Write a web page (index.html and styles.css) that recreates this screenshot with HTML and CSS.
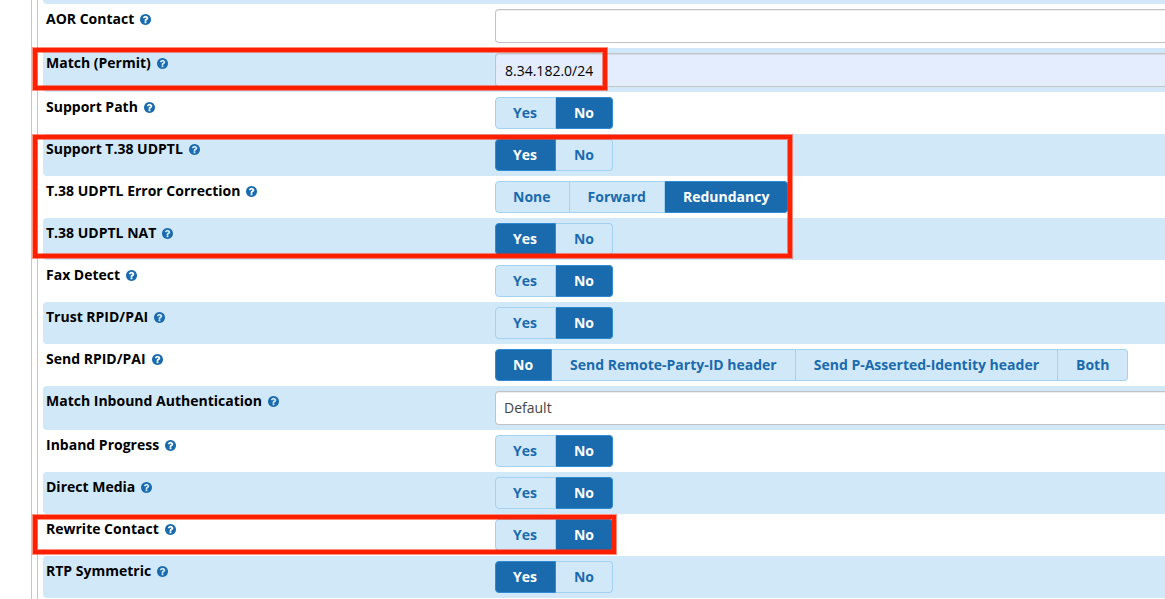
FILE: index.html
```html
<!DOCTYPE html>
<html lang="en">
<head>
<meta charset="utf-8">
<title>Trunk Settings</title>
<link rel="stylesheet" href="styles.css">
</head>
<body>
<svg class="sprite" aria-hidden="true">
  <symbol id="help" viewBox="128 128 1536 1536">
    <path d="M1024 1376v-192q0-14-9-23t-23-9h-192q-14 0-23 9t-9 23v192q0 14 9 23t23 9h192q14 0 23-9t9-23zm256-672q0-88-55.500-163t-138.500-116-170-41q-243 0-371 213-15 24 8 42l132 100q7 6 19 6 16 0 25-12 53-68 86-92 34-24 86-24 48 0 85.500 26t37.500 59q0 38-20 61t-68 45q-63 28-115.500 86.500t-52.500 125.500v36q0 14 9 23t23 9h192q14 0 23-9t9-23q0-19 21.500-49.500t54.500-49.500q32-18 49-28.500t46-35 44.500-48 28-60.500 12.500-81zm384 192q0 209-103 385.500t-279.500 279.500-385.500 103-385.500-103-279.500-279.500-103-385.500 103-385.500 279.500-279.500 385.500-103 385.500 103 279.500 279.500 103 385.500z"/>
  </symbol>
</svg>
<main class="page">
<form class="panel">
  <div class="row-end"></div>
  <div class="row">
    <div class="name"><label for="aor">AOR Contact</label><svg class="help"><use href="#help"/></svg></div>
    <div class="control"><input class="field" type="text" id="aor"></div>
  </div>
  <div class="marked marked-match">
    <div class="row shaded">
      <div class="name"><label for="match">Match (Permit)</label><svg class="help"><use href="#help"/></svg></div>
      <div class="control"><input class="field filled" type="text" id="match" value="8.34.182.0/24"></div>
    </div>
  </div>
  <div class="row" role="radiogroup" aria-labelledby="l-path">
    <div class="name"><span id="l-path">Support Path</span><svg class="help"><use href="#help"/></svg></div>
    <div class="control choices"><input type="radio" name="path" id="path-y"><label for="path-y">Yes</label><input type="radio" name="path" id="path-n" checked><label for="path-n">No</label></div>
  </div>
  <div class="marked marked-fax">
    <div class="row shaded" role="radiogroup" aria-labelledby="l-t38">
      <div class="name"><span id="l-t38">Support T.38 UDPTL</span><svg class="help"><use href="#help"/></svg></div>
      <div class="control choices"><input type="radio" name="t38" id="t38-y" checked><label for="t38-y">Yes</label><input type="radio" name="t38" id="t38-n"><label for="t38-n">No</label></div>
    </div>
    <div class="row" role="radiogroup" aria-labelledby="l-ec">
      <div class="name"><span id="l-ec">T.38 UDPTL Error Correction</span><svg class="help"><use href="#help"/></svg></div>
      <div class="control choices"><input type="radio" name="ec" id="ec-n"><label for="ec-n">None</label><input type="radio" name="ec" id="ec-f"><label for="ec-f">Forward</label><input type="radio" name="ec" id="ec-r" checked><label for="ec-r">Redundancy</label></div>
    </div>
    <div class="row shaded" role="radiogroup" aria-labelledby="l-nat">
      <div class="name"><span id="l-nat">T.38 UDPTL NAT</span><svg class="help"><use href="#help"/></svg></div>
      <div class="control choices"><input type="radio" name="nat" id="nat-y" checked><label for="nat-y">Yes</label><input type="radio" name="nat" id="nat-n"><label for="nat-n">No</label></div>
    </div>
  </div>
  <div class="row" role="radiogroup" aria-labelledby="l-fax">
    <div class="name"><span id="l-fax">Fax Detect</span><svg class="help"><use href="#help"/></svg></div>
    <div class="control choices"><input type="radio" name="fax" id="fax-y"><label for="fax-y">Yes</label><input type="radio" name="fax" id="fax-n" checked><label for="fax-n">No</label></div>
  </div>
  <div class="row shaded" role="radiogroup" aria-labelledby="l-trust">
    <div class="name"><span id="l-trust">Trust RPID/PAI</span><svg class="help"><use href="#help"/></svg></div>
    <div class="control choices"><input type="radio" name="trust" id="trust-y"><label for="trust-y">Yes</label><input type="radio" name="trust" id="trust-n" checked><label for="trust-n">No</label></div>
  </div>
  <div class="row" role="radiogroup" aria-labelledby="l-send">
    <div class="name"><span id="l-send">Send RPID/PAI</span><svg class="help"><use href="#help"/></svg></div>
    <div class="control choices"><input type="radio" name="send" id="send-n" checked><label for="send-n">No</label><input type="radio" name="send" id="send-r"><label for="send-r">Send Remote-Party-ID header</label><input type="radio" name="send" id="send-p"><label for="send-p">Send P-Asserted-Identity header</label><input type="radio" name="send" id="send-b"><label for="send-b">Both</label></div>
  </div>
  <div class="row shaded">
    <div class="name"><label for="auth">Match Inbound Authentication</label><svg class="help"><use href="#help"/></svg></div>
    <div class="control"><select class="field" id="auth"><option>Default</option></select></div>
  </div>
  <div class="row" role="radiogroup" aria-labelledby="l-inband">
    <div class="name"><span id="l-inband">Inband Progress</span><svg class="help"><use href="#help"/></svg></div>
    <div class="control choices"><input type="radio" name="inband" id="inband-y"><label for="inband-y">Yes</label><input type="radio" name="inband" id="inband-n" checked><label for="inband-n">No</label></div>
  </div>
  <div class="row shaded" role="radiogroup" aria-labelledby="l-direct">
    <div class="name"><span id="l-direct">Direct Media</span><svg class="help"><use href="#help"/></svg></div>
    <div class="control choices"><input type="radio" name="direct" id="direct-y"><label for="direct-y">Yes</label><input type="radio" name="direct" id="direct-n" checked><label for="direct-n">No</label></div>
  </div>
  <div class="marked marked-rewrite">
    <div class="row" role="radiogroup" aria-labelledby="l-rewrite">
      <div class="name"><span id="l-rewrite">Rewrite Contact</span><svg class="help"><use href="#help"/></svg></div>
      <div class="control choices"><input type="radio" name="rewrite" id="rewrite-y"><label for="rewrite-y">Yes</label><input type="radio" name="rewrite" id="rewrite-n" checked><label for="rewrite-n">No</label></div>
    </div>
  </div>
  <div class="row shaded" role="radiogroup" aria-labelledby="l-rtp">
    <div class="name"><span id="l-rtp">RTP Symmetric</span><svg class="help"><use href="#help"/></svg></div>
    <div class="control choices"><input type="radio" name="rtp" id="rtp-y" checked><label for="rtp-y">Yes</label><input type="radio" name="rtp" id="rtp-n"><label for="rtp-n">No</label></div>
  </div>
</form>
</main>
</body>
</html>
```

FILE: styles.css
```css
*, *::after { box-sizing: border-box; }

body {
  margin: 0;
  background: #fff;
  color: #000;
  font: 14px/20px "Open Sans", "Noto Sans", sans-serif;
}

.sprite { display: none; }

.page { padding-left: 31px; }

.panel {
  min-height: 100vh;
  padding-left: 11px;
  border-left: 1px solid #a9cfea;
  background: linear-gradient(#a9cfea, #a9cfea) 5px 0 / 1px 100% no-repeat;
}

.row-end {
  height: 4px;
  background: #d1e8f8;
  border-bottom-left-radius: 4px;
}

.row {
  display: flex;
  align-items: flex-start;
  padding: 5px 0 5px 3px;
  border-radius: 4px 0 0 4px;
}

.shaded { background: #d1e8f8; }

.name {
  flex: 0 0 449px;
  display: flex;
  align-items: center;
  gap: 6px;
  font-weight: 700;
}

.help {
  width: 11px;
  height: 11px;
  fill: #1a6bae;
}

.control {
  flex: 1;
  min-width: 0;
  display: flex;
}

.field {
  width: 100%;
  height: 34px;
  padding: 6px 9px;
  border: 1px solid #c3c3c3;
  border-right: 0;
  border-radius: 4px 0 0 4px;
  background: #fff;
  box-shadow: inset 0 1px 1px rgba(0, 0, 0, .075);
  color: #000;
  font: inherit;
  appearance: none;
}

select.field {
  padding-left: 8px;
  color: #444;
}

.filled { background: #e4edfe; }

.choices input {
  position: absolute;
  opacity: 0;
  pointer-events: none;
}

.choices label {
  padding: 5px 18px;
  border: 1px solid #a3d2f0;
  border-left-width: 0;
  background: #d1e8f8;
  color: #1a6bae;
  font-weight: 700;
  white-space: nowrap;
  cursor: pointer;
}

.choices label:first-of-type {
  padding-left: 17px;
  border-left-width: 1px;
  border-radius: 4px 0 0 4px;
}

.choices label:last-of-type { border-radius: 0 4px 4px 0; }

.choices input:checked + label {
  border-color: #2f8ad3;
  background: #1a6bae;
  color: #fff;
}

.marked { position: relative; }

.marked::after {
  content: "";
  position: absolute;
  left: -10px;
  border: 4px solid #ff2000;
  box-shadow: 0 0 0 1px rgba(255, 32, 0, .5), inset 0 0 0 1px rgba(255, 32, 0, .5);
  pointer-events: none;
}

.marked-match::after { top: 0; bottom: 2px; width: 574px; }
.marked-fax::after { top: 1px; bottom: 2px; width: 759px; }
.marked-rewrite::after { top: 1px; bottom: 2px; width: 583px; }
```
